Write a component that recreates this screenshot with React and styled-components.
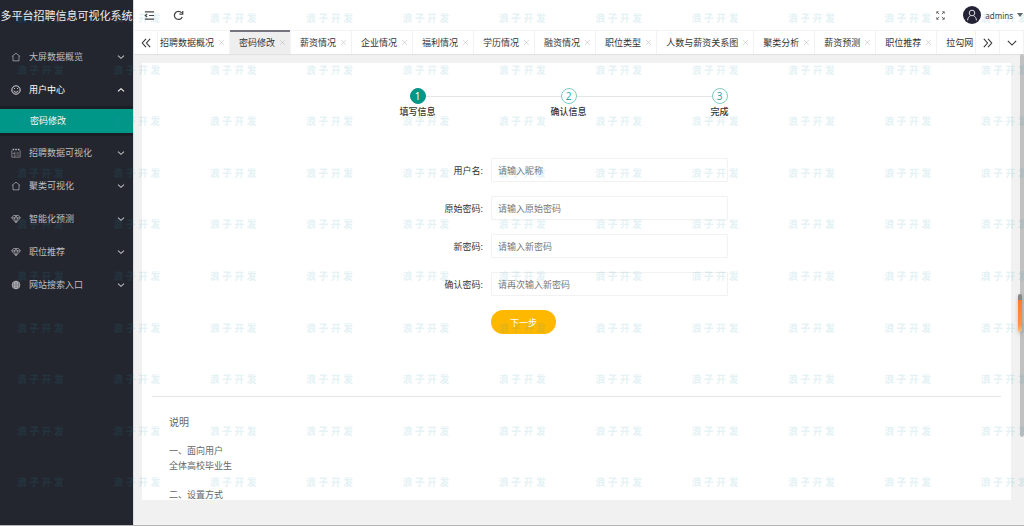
import React, { useState } from "react";
import styled, { createGlobalStyle } from "styled-components";

const menu = [
  { name: "大屏数据概览", icon: "home" },
  { name: "用户中心", icon: "smile", children: ["密码修改"] },
  { name: "招聘数据可视化", icon: "chart" },
  { name: "聚类可视化", icon: "home" },
  { name: "智能化预测", icon: "gem" },
  { name: "职位推荐", icon: "gem" },
  { name: "网站搜索入口", icon: "globe" },
];

const tabs = [
  "招聘数据概况",
  "密码修改",
  "薪资情况",
  "企业情况",
  "福利情况",
  "学历情况",
  "融资情况",
  "职位类型",
  "人数与薪资关系图",
  "聚类分析",
  "薪资预测",
  "职位推荐",
  "拉勾网",
];

const steps = ["填写信息", "确认信息", "完成"];

const fields = [
  { id: "nickname", label: "用户名:", hint: "请输入昵称", type: "text" },
  { id: "oldPassword", label: "原始密码:", hint: "请输入原始密码", type: "password" },
  { id: "newPassword", label: "新密码:", hint: "请输入新密码", type: "password" },
  { id: "rePassword", label: "确认密码:", hint: "请再次输入新密码", type: "password" },
];

const shapes = {
  home: <path d="M1 5.4 6 1.4l5 4M2.4 4.6v6h7.2v-6" strokeWidth="0.8" />,
  smile: (
    <>
      <circle cx="6" cy="6" r="5" />
      <path d="M3.4 6.8c.6 2.4 4.6 2.4 5.2 0M4.2 3.8v1M7.8 3.8v1" />
    </>
  ),
  chart: (
    <>
      <path d="M1 2.5v8.5h10V2.5M4.6 4.5v6M2 6.5h2M6.5 6h3M6.5 8.5h3" strokeWidth="0.7" />
      <path d="M2 1.8h1.8M5.1 1.8h1.8M8.2 1.8H10" strokeWidth="1.8" />
    </>
  ),
  gem: <path d="M3 1.8h6l2.2 2.8L6 10.6.8 4.6zM.8 4.6h10.4M3.8 4.8 6 10l2.2-5.2M4 4.4l2-2 2 2" strokeWidth="0.8" />,
  globe: (
    <>
      <circle cx="6" cy="6" r="4.6" />
      <ellipse cx="6" cy="6" rx="2.2" ry="4.6" />
      <path d="M1.4 6h9.2M2 3.8h8M2 8.2h8M6 1.4v9.2" />
    </>
  ),
  down: <path d="m1.5 4 4.5 4 4.5-4" strokeWidth="1.6" />,
  up: <path d="m1.5 8 4.5-4 4.5 4" strokeWidth="1.6" />,
  wideDown: <path d="m1 3.5 5 5 5-5" strokeWidth="1.3" />,
  left: <path d="M6 1 1.5 6 6 11M11 1 6.5 6l4.5 5" strokeWidth="1.3" />,
  right: <path d="M1 1l4.5 5L1 11M6 1l4.5 5L6 11" strokeWidth="1.3" />,
  close: <path d="m2 2 8 8M10 2l-8 8" />,
  fold: <path d="M1 2h10M5.5 6H11M1 10h10M3.4 4.4 1.4 6l2 1.6" strokeWidth="1.3" />,
  refresh: (
    <>
      <path d="M10 7.6A4.4 4.4 0 1 1 9.4 3.2" strokeWidth="1.4" />
      <path d="M10.6 1v3.6H7" strokeWidth="1.4" />
    </>
  ),
  full: <path d="M1 3.6V1h2.6M1.2 1.2l3 3M8.4 1H11v2.6M10.8 1.2l-3 3M1 8.4V11h2.6M1.2 10.8l3-3M8.4 11H11V8.4M10.8 10.8l-3-3" />,
  user: (
    <>
      <circle cx="6" cy="4" r="2.8" />
      <path d="M1.6 11.4c0-2.4 1.4-4 3-4.8M10.4 11.4c0-2.4-1.4-4-3-4.8" />
    </>
  ),
};

const Icon = ({ name, size = 10 }) => (
  <Glyph viewBox="0 0 12 12" width={size} height={size} aria-hidden="true">
    {shapes[name]}
  </Glyph>
);

const App = () => {
  const [active, setActive] = useState("密码修改");
  const [form, setForm] = useState({});

  const onChange = (event) => {
    setForm({ ...form, [event.target.name]: event.target.value });
  };

  return (
    <Page>
      <GlobalStyle />
      <Sidebar>
        <Logo>多平台招聘信息可视化系统</Logo>
        <Menu>
          {menu.map((item) => (
            <li key={item.name}>
              <MenuButton type="button" $open={item.children}>
                <Icon name={item.icon} />
                <span>{item.name}</span>
                <Icon name={item.children ? "up" : "down"} size={8} />
              </MenuButton>
              {item.children && (
                <SubMenu>
                  {item.children.map((child) => (
                    <SubLink href="#password" key={child}>
                      {child}
                    </SubLink>
                  ))}
                </SubMenu>
              )}
            </li>
          ))}
        </Menu>
      </Sidebar>

      <Main>
        <Header>
          <IconButton type="button" aria-label="侧边伸缩">
            <Icon name="fold" size={11} />
          </IconButton>
          <IconButton type="button" aria-label="刷新">
            <Icon name="refresh" size={11} />
          </IconButton>
          <Spacer />
          <IconButton type="button" aria-label="全屏">
            <Icon name="full" size={9} />
          </IconButton>
          <UserButton type="button">
            <Avatar>
              <Icon name="user" size={12} />
            </Avatar>
            admins
            <Caret />
          </UserButton>
        </Header>

        <TabBar>
          <TabControl type="button" aria-label="向左">
            <Icon name="left" size={10} />
          </TabControl>
          <TabList>
            {tabs.map((tab) => (
              <Tab key={tab} $active={tab === active}>
                <TabName type="button" onClick={() => setActive(tab)}>
                  {tab}
                </TabName>
                <TabClose type="button" aria-label={`关闭${tab}`}>
                  <Icon name="close" size={7} />
                </TabClose>
              </Tab>
            ))}
          </TabList>
          <TabControl type="button" aria-label="向右">
            <Icon name="right" size={10} />
          </TabControl>
          <TabControl type="button" aria-label="更多">
            <Icon name="wideDown" size={10} />
          </TabControl>
        </TabBar>

        <Body>
          <Card>
            <FormArea>
              <Steps>
                {steps.map((step, index) => (
                  <Step key={step}>
                    <StepLine $hidden={index === 0} />
                    <StepNumber $active={index === 0}>{index + 1}</StepNumber>
                    <StepLine $hidden={index === steps.length - 1} />
                    <StepName>{step}</StepName>
                  </Step>
                ))}
              </Steps>
              <Form onSubmit={(event) => event.preventDefault()}>
                {fields.map((field) => (
                  <Field key={field.id}>
                    <Label htmlFor={field.id}>{field.label}</Label>
                    <Input
                      id={field.id}
                      name={field.id}
                      type={field.type}
                      placeholder={field.hint}
                      value={form[field.id] || ""}
                      onChange={onChange}
                    />
                  </Field>
                ))}
                <Submit>下一步</Submit>
              </Form>
            </FormArea>
            <Divider />
            <Notes>
              <h3>说明</h3>
              <p>
                一、面向用户
                <br />
                全体高校毕业生
              </p>
              <p>二、设置方式</p>
            </Notes>
          </Card>
        </Body>
      </Main>

      <ScrollThumb />
      <Watermarks aria-hidden="true">
        {Array.from({ length: 110 }, (_, index) => (
          <span key={index}>浪 子 开 发</span>
        ))}
      </Watermarks>
      <SideMarker />
    </Page>
  );
};
export default App;

// STYLES =>
const GlobalStyle = createGlobalStyle`
  * {
    box-sizing: border-box;
  }
  body {
    margin: 0;
    font-family: "Noto Sans", "Noto Sans CJK SC", sans-serif;
    font-size: 9px;
    color: #333;
  }
  button, input {
    font: inherit;
    color: inherit;
  }
  button {
    padding: 0;
    border: none;
    background: none;
    cursor: pointer;
  }
  ul, ol {
    margin: 0;
    padding: 0;
    list-style: none;
  }
`;
const Glyph = styled.svg`
  flex: none;
  display: block;
  fill: none;
  stroke: currentColor;
  stroke-width: 1;
`;
const Page = styled.div`
  position: relative;
  display: flex;
  height: 100vh;
  overflow: hidden;
  background-color: #f1f1f1;
  border-bottom: 1px solid #b5b5b5;
`;
const Sidebar = styled.nav`
  flex: none;
  width: 133px;
  background-color: #23262e;
`;
const Logo = styled.div`
  height: 32px;
  line-height: 32px;
  font-size: 11px;
  text-align: center;
  white-space: nowrap;
  color: #f0f0f0;
`;
const Menu = styled.ul`
  padding-top: 8px;
`;
const MenuButton = styled.button`
  display: flex;
  align-items: center;
  gap: 8px;
  width: 100%;
  height: 33px;
  padding: 0 8px 0 11px;
  color: ${({ $open }) => ($open ? "#fff" : "#bdbec0")};
  span {
    flex: 1;
    text-align: left;
  }
`;
const SubMenu = styled.div`
  padding: 3px 0;
  background-color: #1b1e24;
`;
const SubLink = styled.a`
  display: block;
  padding-left: 30px;
  line-height: 24px;
  color: #fff;
  text-decoration: none;
  background-color: #009688;
`;
const Main = styled.main`
  flex: 1;
  min-width: 0;
  display: flex;
  flex-direction: column;
  border-left: 1px solid #ddd;
`;
const Header = styled.header`
  flex: none;
  display: flex;
  align-items: center;
  gap: 18px;
  height: 30px;
  padding: 0 1px 0 10px;
  background-color: #fff;
`;
const IconButton = styled.button`
  color: #444;
`;
const Spacer = styled.div`
  flex: 1;
`;
const UserButton = styled.button`
  display: flex;
  align-items: center;
  gap: 4px;
  font-size: 8px;
  color: #444;
`;
const Avatar = styled.span`
  display: grid;
  place-items: center;
  width: 18px;
  height: 18px;
  border-radius: 50%;
  color: #ddd;
  background-color: #232236;
`;
const Caret = styled.span`
  border: 3px solid transparent;
  border-top: 4px solid #666;
  border-bottom: none;
`;
const TabBar = styled.div`
  flex: none;
  display: flex;
  height: 24px;
  background-color: #fff;
  box-shadow: 0 1px 1px rgba(0, 0, 0, 0.06);
`;
const TabControl = styled.button`
  flex: none;
  display: grid;
  place-items: center;
  width: 24px;
  border-top: 1px solid #f2f2f2;
  border-right: 1px solid #f2f2f2;
`;
const TabList = styled.ul`
  flex: 1;
  display: flex;
  overflow: hidden;
  border-right: 1px solid #f2f2f2;
`;
const Tab = styled.li`
  flex: none;
  display: flex;
  align-items: center;
  gap: 4px;
  padding: 0 4px 0 9px;
  border-right: 1px solid #f2f2f2;
  background-color: ${({ $active }) => ($active ? "#eee" : "#fff")};
  box-shadow: inset 0 ${({ $active }) => ($active ? "2px #75757f" : "1px #f2f2f2")};
  &:first-child {
    padding-left: 2px;
  }
`;
const TabName = styled.button`
  white-space: nowrap;
`;
const TabClose = styled.button`
  color: #bbb;
`;
const Body = styled.div`
  flex: 1;
  min-height: 0;
  padding: 9px 13px 25px 8px;
`;
const Card = styled.section`
  height: 100%;
  padding: 25px 10px 0;
  overflow: hidden;
  background-color: #fff;
`;
const FormArea = styled.div`
  display: flex;
  flex-direction: column;
  align-items: center;
  gap: 38px;
  padding: 0 16px 62px 0;
`;
const Steps = styled.ol`
  display: grid;
  grid-template-columns: repeat(3, 1fr);
  width: 453px;
`;
const Step = styled.li`
  display: grid;
  grid-template-columns: 1fr 16px 1fr;
  align-items: center;
`;
const StepLine = styled.span`
  height: 1px;
  background-color: ${({ $hidden }) => ($hidden ? "transparent" : "#e6e6e6")};
`;
const StepNumber = styled.span`
  height: 16px;
  border: 1px solid ${({ $active }) => ($active ? "#009688" : "#80cac3")};
  border-radius: 50%;
  line-height: 14px;
  font-size: 10px;
  text-align: center;
  color: ${({ $active }) => ($active ? "#fff" : "#33aba0")};
  background-color: ${({ $active }) => ($active ? "#009688" : "#fff")};
`;
const StepName = styled.span`
  grid-column: 1 / -1;
  line-height: 16px;
  text-align: center;
  font-weight: 500;
`;
const Form = styled.form`
  display: flex;
  flex-direction: column;
  gap: 14px;
  width: 453px;
`;
const Field = styled.div`
  display: grid;
  grid-template-columns: 141px 237px;
  column-gap: 8px;
  align-items: center;
`;
const Label = styled.label`
  text-align: right;
`;
const Input = styled.input`
  height: 24px;
  padding: 0 6px;
  border: 1px solid #f2f2f2;
  border-radius: 1px;
  background-color: #fff;
  outline: none;
  &::placeholder {
    color: #777;
  }
`;
const Submit = styled.button`
  width: 65px;
  height: 24px;
  margin-left: 149px;
  border-radius: 12px;
  color: #fff;
  background-color: #ffb800;
`;
const Divider = styled.hr`
  height: 1px;
  margin: 0;
  border: none;
  background-color: #e6e6e6;
`;
const Notes = styled.div`
  padding: 18px 17px 0;
  line-height: 15px;
  color: #666;
  h3 {
    margin: 0 0 13px;
    font-size: 10px;
    font-weight: 400;
  }
  p {
    margin: 0 0 14px;
  }
`;
const ScrollThumb = styled.div`
  position: absolute;
  top: 54px;
  right: 0;
  width: 4px;
  height: 73%;
  border-radius: 2px;
  background-color: #c1c1c1;
`;
const SideMarker = styled.div`
  position: absolute;
  top: 56%;
  right: 2px;
  width: 4px;
  height: 38px;
  border-radius: 2px;
  background: linear-gradient(#888 0 6px, #ff7a2a 6px, #ff8f45 80%, #f5c07a);
  box-shadow: 0 2px 4px rgba(0, 0, 0, 0.2);
`;
const Watermarks = styled.div`
  position: absolute;
  inset: 0 -36px 9px 0;
  display: grid;
  grid-template-columns: repeat(11, 1fr);
  grid-auto-rows: 1fr;
  pointer-events: none;
  font-family: "Noto Sans CJK SC", sans-serif;
  font-size: 10px;
  font-weight: 900;
  line-height: 36px;
  color: rgba(40, 150, 180, 0.12);
  span {
    padding-left: 17px;
    white-space: nowrap;
  }
`;
